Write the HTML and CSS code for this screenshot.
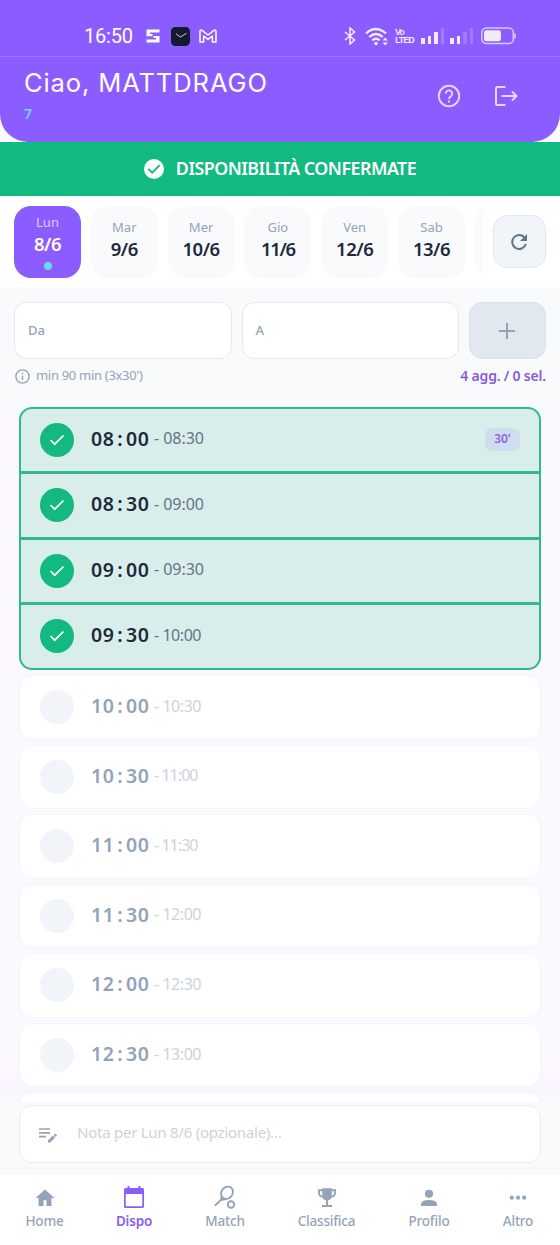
FILE: index.html
```html
<!DOCTYPE html>
<html lang="it">
<head>
<meta charset="utf-8">
<title>Disponibilità</title>
<link rel="stylesheet" href="styles.css">
</head>
<body>
<div class="app">
  <div class="statusbar">
    <span class="clock">16:50</span>
    <svg class="st-s" width="14" height="14" viewBox="0 0 14 14"><path d="M.5 .5h13v3H4v2H.5zM.5 10.500H10v-2h3.500v5H.5z M.5 5h6v2.200h-6zM7.500 7h6v2h-6z" fill="#fff"/></svg>
    <svg class="st-w" width="19" height="19" viewBox="0 0 19 19"><rect width="19" height="19" rx="4.500" fill="#171a2e"/><path d="M5 6.800l4.300 3.200 6.200-3.700" fill="none" stroke="#cfe0e6" stroke-width=".9"/></svg>
    <svg class="st-m" width="18" height="14" viewBox="0 0 18 14"><path d="M1 13V2.500Q1 .3 3 1.300L9 6l6-4.700Q17 .3 17 2.500V13h-3.600V7L9 10.300 4.600 7v6z" fill="none" stroke="#fff" stroke-width="1.500" stroke-linejoin="round"/></svg>
    <span class="fill"></span>
    <svg class="st-bt" width="12" height="18" viewBox="0 0 12 18"><path d="M1 5l9.500 8L6 17V1l4.500 4L1 13" fill="none" stroke="#f2eaff" stroke-width="1.600"/></svg>
    <svg class="st-wifi" width="24" height="19" viewBox="0 0 24 19"><g fill="none" stroke="#f2eaff" stroke-width="2.300"><path d="M1 6.500q9.500-9 20 0M4.200 10q6.800-6 13.600 0M7.300 13.300q3.700-3 7.400 0"/></g><circle cx="11" cy="16.500" r="1.700" fill="#f2eaff"/><path d="M17.500 13.500l2.700-3 2.700 3zM17.500 15.500l2.700 3 2.700-3z" fill="#f2eaff"/></svg>
    <span class="volte"><span>Vo</span><span>LTED</span></span>
    <span class="bars b1"><i></i><i></i><i></i><i></i></span>
    <span class="bars b2"><i></i><i></i><i></i><i></i></span>
    <svg class="st-bat" width="36" height="18" viewBox="0 0 36 18"><rect x=".8" y="1" width="31.500" height="15.500" rx="4.500" fill="none" stroke="#d9c8ff" stroke-width="1.500"/><rect x="3" y="3.300" width="17" height="11" rx="2.500" fill="#f2eaff"/><path d="M34 6.500v5" stroke="#d9c8ff" stroke-width="1.700"/></svg>
  </div>
  <div class="headwrap">
    <header class="head">
      <div class="greet">
        <h1>Ciao, MATTDRAGO</h1>
        <span class="count">7</span>
      </div>
      <svg class="help" width="24" height="24" viewBox="0 0 24 24" fill="none" stroke="#e6d9ff" stroke-width="1.900"><circle cx="12" cy="12" r="10.200"/><path d="M8.800 9.800a3.200 3.200 0 1 1 5.200 2.300c-1.200.9-2 1.500-2 3"/><path d="M12 16.400v2"/></svg>
      <svg class="exit" width="24" height="22" viewBox="0 0 24 22" fill="none" stroke="#e6d9ff" stroke-width="2"><path d="M11.500 2H3.500Q2 2 2 3.500v15Q2 20 3.500 20h8M7.500 11H22M18 6.500l4.500 4.500-4.500 4.500"/></svg>
    </header>
  </div>
  <div class="banner">
    <svg width="20" height="20" viewBox="0 0 20 20"><circle cx="10" cy="10" r="10" fill="#fff"/><path d="M4.300 9.800l3.900 3.900 7.500-7.500" fill="none" stroke="#12b981" stroke-width="1.900"/></svg>
    <span>DISPONIBILITÀ CONFERMATE</span>
  </div>
  <div class="days">
    <div class="strip">
      <div class="day on"><span>Lun</span><b>8/6</b><i></i></div>
      <div class="day"><span>Mar</span><b>9/6</b></div>
      <div class="day"><span>Mer</span><b>10/6</b></div>
      <div class="day"><span>Gio</span><b class="narrow">11/6</b></div>
      <div class="day"><span>Ven</span><b>12/6</b></div>
      <div class="day"><span>Sab</span><b>13/6</b></div>
      <div class="day"></div>
    </div>
    <div class="refresh"><svg width="18" height="18" viewBox="0 0 18 18"><path d="M14.800 4.800A7 7 0 1 0 15.900 11" fill="none" stroke="#64748b" stroke-width="2"/><path d="M17 1v7h-7z" fill="#64748b"/></svg></div>
  </div>
  <div class="form">
    <div class="fields">
      <div class="field">Da</div>
      <div class="field">A</div>
      <div class="add"><svg width="16" height="16" viewBox="0 0 16 16"><path d="M8 0v16M0 8h16" stroke="#94a3b8" stroke-width="2"/></svg></div>
    </div>
    <div class="hint">
      <svg width="15" height="15" viewBox="0 0 15 15"><circle cx="7.500" cy="7.500" r="6.600" fill="none" stroke="#94a3b8" stroke-width="1.400"/><path d="M7.500 6.600v4.400M7.500 3.700v1.600" stroke="#94a3b8" stroke-width="1.400"/></svg>
      <span class="min">min 90 min (3x30')</span>
      <span class="sel">4 agg. / 0 sel.</span>
    </div>
  </div>
  <div class="list">
    <div class="block">
      <div class="slot ok"><span class="dot"><svg width="16" height="12" viewBox="0 0 16 12"><path d="M1.500 6l4.200 4.200L14.500 1.500"/></svg></span><b>08<i>:</i>00</b><span class="to">- 08:30</span><span class="tag">30'</span></div>
      <div class="slot ok"><span class="dot"><svg width="16" height="12" viewBox="0 0 16 12"><path d="M1.500 6l4.200 4.200L14.500 1.500"/></svg></span><b>08<i>:</i>30</b><span class="to">- 09:00</span></div>
      <div class="slot ok"><span class="dot"><svg width="16" height="12" viewBox="0 0 16 12"><path d="M1.500 6l4.200 4.200L14.500 1.500"/></svg></span><b>09<i>:</i>00</b><span class="to">- 09:30</span></div>
      <div class="slot ok"><span class="dot"><svg width="16" height="12" viewBox="0 0 16 12"><path d="M1.500 6l4.200 4.200L14.500 1.500"/></svg></span><b>09<i>:</i>30</b><span class="to one">- 10:00</span></div>
    </div>
    <div class="slot off"><span class="dot"></span><b>10<i>:</i>00</b><span class="to one">- 10:30</span></div>
    <div class="slot off"><span class="dot"></span><b>10<i>:</i>30</b><span class="to two">- 11:00</span></div>
    <div class="slot off"><span class="dot"></span><b>11<i>:</i>00</b><span class="to two">- 11:30</span></div>
    <div class="slot off"><span class="dot"></span><b>11<i>:</i>30</b><span class="to one">- 12:00</span></div>
    <div class="slot off"><span class="dot"></span><b>12<i>:</i>00</b><span class="to one">- 12:30</span></div>
    <div class="slot off"><span class="dot"></span><b>12<i>:</i>30</b><span class="to one">- 13:00</span></div>
    <div class="slot off"></div>
  </div>
  <div class="notewrap">
    <div class="note">
      <svg width="18" height="16" viewBox="0 0 18 16"><path d="M0 2h11M0 5.800h11M0 9.600h7" stroke="#94a3b8" stroke-width="1.700"/><path d="M9 15.500v-2.300l5-4.600 2.100 2.200-5 4.700zM14.700 7.900l1-.9q.5-.4 1 0l1 1q.4.500 0 1l-1 .9z" fill="#94a3b8"/></svg>
      <span>Nota per Lun 8/6 (opzionale)...</span>
    </div>
  </div>
  <nav class="nav">
    <div class="n1"><svg width="26" height="24" viewBox="0 0 26 24"><path d="M13 4.500L3.500 13h3v8h5v-5.800h3V21h5v-8h3z" fill="#94a3b8"/></svg><span>Home</span></div>
    <div class="n2 cur"><svg width="26" height="24" viewBox="0 0 26 24"><path d="M3 4.500q0-1.500 1.500-1.500h17Q23 3 23 4.500v17q0 1.500-1.500 1.500h-17Q3 23 3 21.500zM4.700 9v12.300h16.600V9z" fill="#8b5cf6" fill-rule="evenodd"/><path d="M7.500 1v3M18.500 1v3" stroke="#8b5cf6" stroke-width="2"/></svg><span>Dispo</span></div>
    <div class="n3"><svg width="26" height="24" viewBox="0 0 26 24" fill="none" stroke="#94a3b8" stroke-width="1.900"><ellipse cx="15" cy="7.800" rx="5.600" ry="6.500" transform="rotate(40 15 7.800)"/><path d="M9.700 11.500L9 15l-6.200 5.700M9 15l4-.6"/><circle cx="19" cy="19.500" r="3.200"/></svg><span>Match</span></div>
    <div class="n4"><svg width="26" height="24" viewBox="0 0 26 24"><path d="M8.200 3.300h9.600V11q-.6 4.400-4.800 4.700-4.200-.3-4.800-4.700z" fill="#94a3b8"/><path d="M9 5.300H4.900v2.500q.2 3.700 4.300 4.200M17 5.300h4.100v2.500q-.2 3.700-4.300 4.200M13 14v7M8 21h10" fill="none" stroke="#94a3b8" stroke-width="1.900"/></svg><span>Classifica</span></div>
    <div class="n5"><svg width="26" height="24" viewBox="0 0 26 24" fill="#94a3b8"><circle cx="13" cy="8.800" r="4.100"/><path d="M5 21v-2q.5-3.800 8-4 7.500.2 8 4v2z"/></svg><span>Profilo</span></div>
    <div class="n6"><svg width="26" height="24" viewBox="0 0 26 24" fill="#94a3b8"><circle cx="6.800" cy="12.700" r="2.100"/><circle cx="13" cy="12.700" r="2.100"/><circle cx="19.200" cy="12.700" r="2.100"/></svg><span>Altro</span></div>
  </nav>
</div>
</body>
</html>
```
FILE: styles.css
```css
* { box-sizing: border-box; }
body { margin: 0; font-family: "Noto Sans", "Open Sans", sans-serif; color: #1e293b; }
svg { display: block; flex: none; }
i { font-style: normal; }
.app { width: 560px; height: 1245px; display: flex; flex-direction: column; overflow: hidden; background: #fff; }

.statusbar { height: 56px; flex: none; background: #8b5cff; display: flex; align-items: center; padding: 16px 43px 0 84px; color: #fff; }
.clock { font: 400 20px/24px Roboto, sans-serif; width: 62px; letter-spacing: -.2px; }
.st-w { margin-left: 11px; }
.st-m { margin-left: 9px; }
.fill { flex: 1; }
.st-wifi { margin-left: 9px; }
.volte { display: flex; flex-direction: column; width: 19px; margin-left: 6px; font: 700 9px/8px "Liberation Sans", sans-serif; letter-spacing: -1px; color: #f2eaff; }
.bars { display: flex; align-items: flex-end; gap: 3px; height: 16px; }
.bars i { width: 3.500px; background: #f2eaff; }
.bars i:nth-child(1) { height: 6px; }
.bars i:nth-child(2) { height: 8px; }
.bars i:nth-child(3) { height: 12px; }
.bars i:nth-child(4) { height: 16px; background: #a17cff; }
.b1 { margin-left: 7px; }
.b2 { margin-left: 6px; }
.b2 i:nth-child(3) { background: #a17cff; }
.st-bat { margin-left: 8px; }

.headwrap { height: 86px; flex: none; background: #fbfaff; }
.head { height: 86px; background: #8b5cff; border-top: 1px solid #9e78ff; border-radius: 0 0 28px 28px; display: flex; align-items: center; padding: 0 42px 7px 24px; }
.greet { flex: 1; margin-top: -2px; }
h1 { margin: 0; font: 400 25.500px/34px Inter, sans-serif; letter-spacing: .900px; color: #fff; white-space: nowrap; }
.count { display: block; font-size: 14px; line-height: 20px; margin-top: 4px; font-weight: 600; color: #72d5f5; }
.exit { margin-left: 33px; }

.banner { height: 54px; flex: none; background: #12b981; display: flex; align-items: center; justify-content: center; gap: 12px; color: #fff; font-size: 17.800px; font-weight: 600; white-space: nowrap; }
.banner span { letter-spacing: -.500px; padding-bottom: 3px; }

.days { height: 91px; flex: none; display: flex; padding: 10px 14px 0; }
.strip { width: 469px; display: flex; gap: 9.800px; overflow: hidden; }
.day { width: 67px; height: 72px; flex: none; border-radius: 17px; background: #f8fafc; display: flex; flex-direction: column; align-items: center; padding-top: 12px; }
.day span { font-size: 13px; line-height: 18px; color: #94a3b8; }
.day b { font-size: 18.500px; line-height: 24px; margin-top: 1px; font-weight: 600; letter-spacing: -.5px; }
.day b.narrow { letter-spacing: -1.300px; }
.day.on { background: #8b5cff; padding-top: 7px; }
.day.on span { color: #dccdff; }
.day.on b { color: #fff; }
.day i { width: 8px; height: 8px; border-radius: 4px; background: #6bdcf0; margin-top: 6px; }
.refresh { margin: 9px 0 0 10px; width: 53px; height: 53px; border: 1px solid #e2e8f0; border-radius: 14px; background: #f1f5f9; display: grid; place-items: center; padding-right: 1px; }

.form { height: 113px; flex: none; background: #f8fafc; padding: 15px 14px 0; }
.fields { display: flex; gap: 10px; }
.field { width: 217.500px; height: 57px; border: 1px solid #e4e9f0; border-radius: 12px; background: #fff; display: flex; align-items: center; padding: 0 0 2px 13px; font-size: 13px; font-weight: 500; color: #94a3b8; }
.add { flex: 1; height: 57px; border: 1px solid #d9e1eb; border-radius: 13px; background: #e2e8f0; display: grid; place-items: center; padding-right: 1px; }
.hint { display: flex; align-items: center; height: 34px; padding-left: 1px; font-size: 13px; }
.hint span { padding-bottom: 2px; }
.min { flex: 1; margin-left: 6px; color: #94a3b8; letter-spacing: -.3px; }
.sel { font-size: 14px; font-weight: 600; color: #8b5cd6; letter-spacing: -.2px; }

.list { flex: 1; min-height: 0; overflow: hidden; padding: 6.500px 19px 0; background: linear-gradient(#f8fafc, #fcf8ff 24px, #fcf8ff 660px, #fbf4ff 690px, #f8fafc); display: flex; flex-direction: column; gap: 5px; }
.block { border-radius: 13px; overflow: hidden; flex: none; border: 2px solid #34b98d; background: #34b98d; display: flex; flex-direction: column; gap: 3px; margin-bottom: .5px; }
.slot { display: flex; align-items: center; padding-left: 20px; flex: none; }
.ok { height: 62.500px; background: #d9edeb; padding-left: 19px; }
.off { height: 64.550px; border: 1px solid #f6f3fb; border-radius: 13px; background: #fff; }
.dot { width: 34px; height: 34px; border-radius: 50%; background: #f1f4f9; display: grid; place-items: center; }
.ok .dot { background: #12b981; }
.dot path { fill: none; stroke: #fff; stroke-width: 1.700; }
.slot b { display: flex; margin-left: 17px; width: 63px; font-size: 19.500px; line-height: 26px; font-weight: 600; letter-spacing: .6px; padding-bottom: 2px; }
.slot b i { width: 11.500px; text-align: center; }
.to { font-size: 16px; color: #64748b; letter-spacing: -.050px; padding-bottom: 3px; }
.to.one { letter-spacing: -.450px; }
.to.two { letter-spacing: -.950px; }
.off b { color: #94a3b8; }
.off .to { color: #cbd3de; }
.tag { margin: 0 19px 0 auto; width: 35px; height: 23px; border-radius: 7px; background: #d0dcf0; display: grid; place-items: center; padding-bottom: 2px; font-size: 12px; font-weight: 600; color: #8b66d9; }

.notewrap { height: 71px; flex: none; background: #f8fafc; padding: 3px 19px 0; }
.note { height: 58px; border: 1px solid #e8edf3; border-radius: 13px; background: #fff; display: flex; align-items: center; padding-left: 19px; }
.note span { margin-left: 20px; padding-bottom: 5px; font-size: 15px; letter-spacing: -.25px; color: #cbd3de; }
.note svg { margin-top: 2px; }

.nav { height: 72px; flex: none; display: flex; border-top: 1px solid #f4f6f9; padding: 11px 0 0; }
.nav div { display: flex; flex-direction: column; align-items: center; gap: 2px; font-size: 13.500px; line-height: 20px; font-weight: 500; color: #94a3b8; letter-spacing: -.2px; }
.nav .cur { color: #8b5cf6; font-weight: 600; }
.n1 { width: 89px; }
.n2 { width: 90px; }
.n3 { width: 92px; }
.n4 { width: 111px; }
.n5 { width: 94px; }
.n6 { width: 84px; }
```
